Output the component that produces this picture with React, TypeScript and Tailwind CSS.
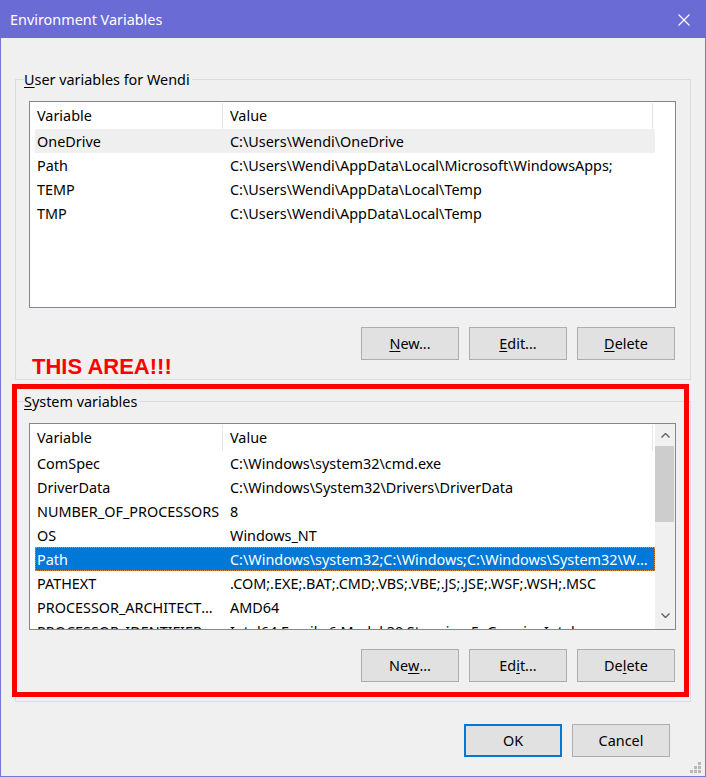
import type { ReactNode } from 'react'

type Row = { name: string; value: string }

const userRows: Row[] = [
  { name: 'OneDrive', value: 'C:\\Users\\Wendi\\OneDrive' },
  { name: 'Path', value: 'C:\\Users\\Wendi\\AppData\\Local\\Microsoft\\WindowsApps;' },
  { name: 'TEMP', value: 'C:\\Users\\Wendi\\AppData\\Local\\Temp' },
  { name: 'TMP', value: 'C:\\Users\\Wendi\\AppData\\Local\\Temp' },
]

const systemRows: Row[] = [
  { name: 'ComSpec', value: 'C:\\Windows\\system32\\cmd.exe' },
  { name: 'DriverData', value: 'C:\\Windows\\System32\\Drivers\\DriverData' },
  { name: 'NUMBER_OF_PROCESSORS', value: '8' },
  { name: 'OS', value: 'Windows_NT' },
  {
    name: 'Path',
    value:
      'C:\\Windows\\system32;C:\\Windows;C:\\Windows\\System32\\Wbem;C:\\Windows\\System32\\WindowsPowerShell\\v1.0\\',
  },
  { name: 'PATHEXT', value: '.COM;.EXE;.BAT;.CMD;.VBS;.VBE;.JS;.JSE;.WSF;.WSH;.MSC' },
  { name: 'PROCESSOR_ARCHITECTURE', value: 'AMD64' },
  { name: 'PROCESSOR_IDENTIFIER', value: 'Intel64 Family 6 Model 30 Stepping 5, GenuineIntel' },
]

function CloseIcon() {
  return (
    <svg viewBox="0 0 12 12" className="h-[12px] w-[12px]" fill="none" stroke="white" strokeWidth="1.1">
      <path d="M0.5 0.5 11.5 11.5M11.5 0.5 0.5 11.5" />
    </svg>
  )
}

function Chevron({ down }: { down?: boolean }) {
  return (
    <svg viewBox="0 0 9 5" className="h-[5px] w-[9px]" fill="none" stroke="#606060" strokeWidth="1.4">
      <path d={down ? 'M0.5 0.5 4.5 4.5 8.5 0.5' : 'M0.5 4.5 4.5 0.5 8.5 4.5'} />
    </svg>
  )
}

// one letter underlined, like a Windows accelerator key
function Key({ text, at }: { text: string; at?: number }) {
  if (at === undefined) return <>{text}</>
  return (
    <>
      {text.slice(0, at)}
      <span className="underline underline-offset-[2px]">{text[at]}</span>
      {text.slice(at + 1)}
    </>
  )
}

function Button({ children, primary }: { children: ReactNode; primary?: boolean }) {
  return (
    <button
      className={
        primary
          ? 'flex h-[33px] w-[98px] items-center justify-center border-2 border-[#0078d7] bg-[#e1e1e1] text-[14.4px] text-black'
          : 'flex h-[33px] w-[98px] items-center justify-center border border-[#adadad] bg-[#e1e1e1] text-[14.4px] text-black'
      }
    >
      {children}
    </button>
  )
}

function VarList({ rows, selected, hover, scroll }: { rows: Row[]; selected?: number; hover?: number; scroll?: boolean }) {
  return (
    <div className="flex h-[207px] w-[647px] overflow-hidden border border-[#828790] bg-white">
      <div className="w-[625px] pl-[5px]">
        <div className="flex h-[27px] items-center pt-[1px] text-[14.4px]">
          <div className="flex h-full w-[188px] items-center border-r border-[#e5e5e5] pl-[2px]">Variable</div>
          <div className="flex h-full w-[430px] items-center border-r border-[#e5e5e5] pl-[7px]">Value</div>
        </div>
        {rows.map((r, i) => (
          <div
            key={r.name}
            className={
              i === selected
                ? 'flex h-[24px] w-[620px] items-center bg-[#0078d7] pt-[1px] text-[14.4px] text-white outline outline-1 -outline-offset-1 outline-dotted outline-[#d98a3c]'
                : i === hover
                  ? 'flex h-[24px] w-[620px] items-center bg-[#efefef] pt-[1px] text-[14.4px] text-black'
                  : 'flex h-[24px] w-[620px] items-center pt-[1px] text-[14.4px] text-black'
            }
          >
            <div className="w-[188px] truncate pl-[2px]">{r.name}</div>
            <div className="w-[430px] truncate pl-[7px]">{r.value}</div>
          </div>
        ))}
      </div>
      {scroll && (
        <div className="flex w-[20px] flex-col bg-[#f0f0f0]">
          <div className="flex h-[22px] items-center justify-center">
            <Chevron />
          </div>
          <div className="h-[76px] w-[19px] bg-[#cdcdcd]" />
          <div className="flex-1" />
          <div className="flex h-[24px] items-center justify-center pb-[4px]">
            <Chevron down />
          </div>
        </div>
      )}
    </div>
  )
}

function Group({ label, children }: { label: ReactNode; children: ReactNode }) {
  return (
    <fieldset className="ml-[14px] w-[676px] border border-[#dcdcdc] px-[13px] pb-[19px]">
      <legend className="-ml-[5px] h-[20px] pr-[2px] text-[14.4px] leading-[22px]">{label}</legend>
      <div className="pt-[12px]">{children}</div>
    </fieldset>
  )
}

export default function App() {
  return (
    <div className="relative h-[777px] w-[706px] bg-[#7676d8] font-['Segoe_UI','Noto_Sans',sans-serif] text-black">
      <div className="flex h-[38px] items-center justify-between bg-[#6b6bd6] pl-[10px] pr-[16px] pt-[1px] text-[14.4px] text-white">
        <span>Environment Variables</span>
        <CloseIcon />
      </div>
      <div className="mx-[1px] flex h-[738px] flex-col bg-[#f0f0f0] pt-[31px]">
        <Group label={<Key text="User variables for Wendi" at={0} />}>
          <VarList rows={userRows} hover={0} />
          <div className="mt-[19px] flex w-[647px] justify-end gap-[10px] pr-[1px]">
            <Button>
              <Key text="New..." at={0} />
            </Button>
            <Button>
              <Key text="Edit..." at={0} />
            </Button>
            <Button>
              <Key text="Delete" at={0} />
            </Button>
          </div>
        </Group>
        <div className="h-[11px]" />
        <Group label={<Key text="System variables" at={0} />}>
          <VarList rows={systemRows} selected={4} scroll />
          <div className="mt-[19px] flex w-[647px] justify-end gap-[10px] pr-[1px]">
            <Button>
              <Key text="New..." at={2} />
            </Button>
            <Button>
              <Key text="Edit..." at={2} />
            </Button>
            <Button>
              <Key text="Delete" at={2} />
            </Button>
          </div>
        </Group>
        <div className="mt-[22px] flex justify-end gap-[10px] pr-[35px]">
          <Button primary>OK</Button>
          <Button>Cancel</Button>
        </div>
      </div>

      {/* annotation drawn over the dialog */}
      <div className="absolute left-[32px] top-[354px] font-['Liberation_Sans',sans-serif] text-[22px] font-bold leading-[26px] text-[#ff0000]">
        THIS AREA!!!
      </div>
      <div className="pointer-events-none absolute left-[12px] top-[384px] h-[313px] w-[677px] border-[5px] border-[#ff0000]" />

      {/* resize grip */}
      <div className="absolute bottom-[4px] right-[5px] grid grid-cols-3 gap-[1px]">
        <span className="h-[3px] w-[3px]" />
        <span className="h-[3px] w-[3px]" />
        <span className="h-[3px] w-[3px] bg-[#b8b8b8]" />
        <span className="h-[3px] w-[3px]" />
        <span className="h-[3px] w-[3px] bg-[#b8b8b8]" />
        <span className="h-[3px] w-[3px] bg-[#b8b8b8]" />
        <span className="h-[3px] w-[3px] bg-[#b8b8b8]" />
        <span className="h-[3px] w-[3px] bg-[#b8b8b8]" />
        <span className="h-[3px] w-[3px] bg-[#b8b8b8]" />
      </div>
    </div>
  )
}
